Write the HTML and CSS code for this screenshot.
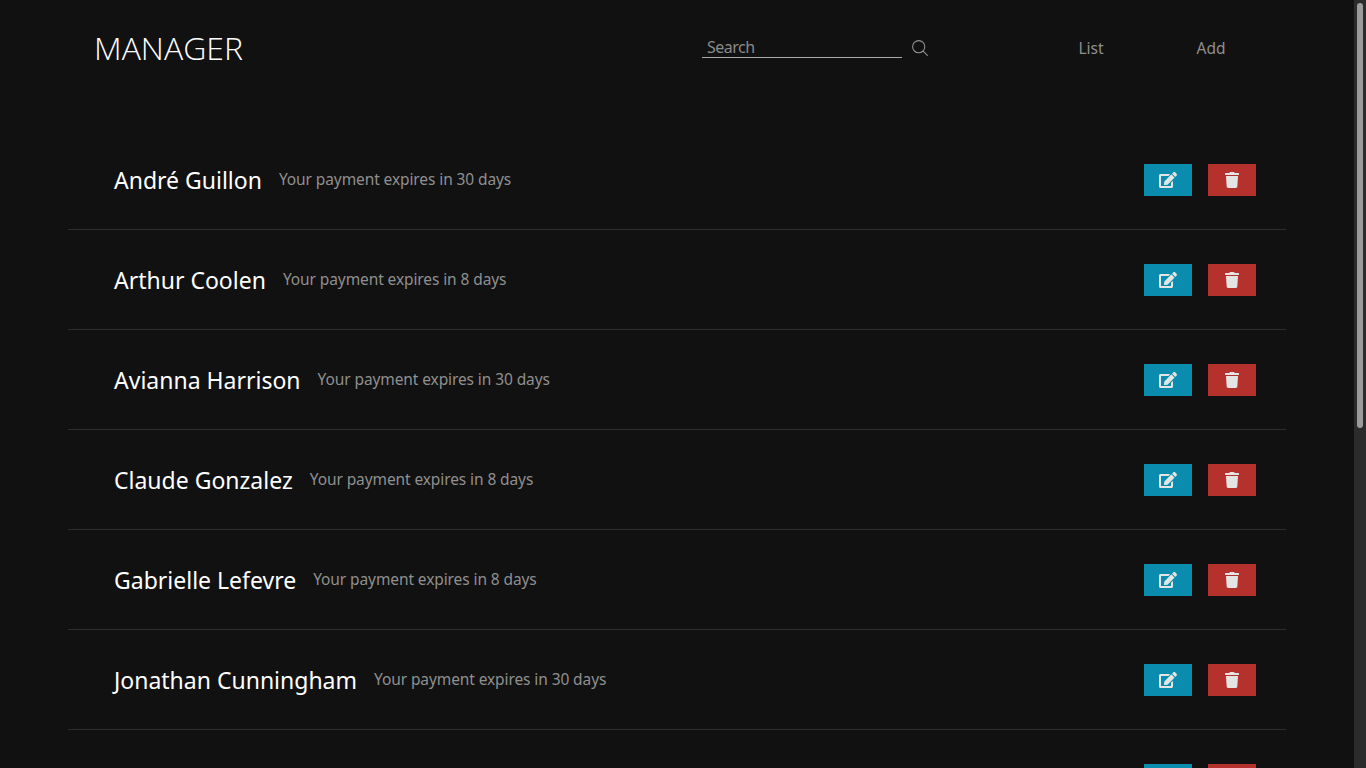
FILE: index.html
```html
<!DOCTYPE html>
<html lang="en">
<head>
<meta charset="utf-8">
<title>Manager</title>
<link rel="stylesheet" href="styles.css">
</head>
<body>
<div class="scrollbar"><div class="scrollbar-thumb"></div></div>
<header class="topbar">
  <h1 class="brand">MANAGER</h1>
  <form class="search">
    <input class="search-input" type="text" placeholder="Search">
    <svg class="search-icon" viewBox="0 0 16 16" width="16" height="16"><circle cx="6.700" cy="6.700" r="6.100"/><path d="M11.100 11.100l4.600 4.600"/></svg>
  </form>
  <nav class="nav"><a class="nav-link">List</a><a class="nav-link">Add</a></nav>
</header>
<main class="list">
  <svg class="sprites" width="0" height="0">
    <symbol id="edit" viewBox="0 0 576 512"><path d="M402.600 83.200l90.200 90.200c3.800 3.800 3.800 10 0 13.800L274.400 405.600l-92.800 10.300c-12.400 1.400-22.900-9.100-21.500-21.500l10.300-92.800L388.800 83.200c3.800-3.800 10-3.800 13.800 0zm162-22.900l-48.800-48.800c-15.200-15.200-39.900-15.200-55.200 0l-35.400 35.400c-3.800 3.800-3.800 10 0 13.800l90.200 90.200c3.800 3.800 10 3.800 13.800 0l35.400-35.400c15.200-15.300 15.200-40 0-55.200zM384 346.200V448H64V128h229.800c3.200 0 6.200-1.300 8.500-3.500l40-40c7.600-7.600 2.200-20.500-8.500-20.500H48C21.500 64 0 85.500 0 112v352c0 26.500 21.500 48 48 48h352c26.500 0 48-21.500 48-48V306.200c0-10.700-12.900-16-20.500-8.500l-40 40c-2.200 2.300-3.500 5.300-3.500 8.500z"/></symbol>
    <symbol id="trash" viewBox="0 0 448 512"><path d="M432 32H312l-9.400-18.700A24 24 0 0 0 281.100 0H166.800a23.720 23.720 0 0 0-21.400 13.300L136 32H16A16 16 0 0 0 0 48v32a16 16 0 0 0 16 16h416a16 16 0 0 0 16-16V48a16 16 0 0 0-16-16zM53.200 467a48 48 0 0 0 47.900 45h245.800a48 48 0 0 0 47.900-45L416 128H32z"/></symbol>
  </svg>
  <article class="row"><div class="who"><span class="name">André Guillon</span><span class="note">Your payment expires in 30 days</span></div><div class="actions"><button class="btn btn-edit"><svg class="ico-edit"><use href="#edit"/></svg></button><button class="btn btn-del"><svg class="ico-del"><use href="#trash"/></svg></button></div></article>
  <article class="row"><div class="who"><span class="name">Arthur Coolen</span><span class="note">Your payment expires in 8 days</span></div><div class="actions"><button class="btn btn-edit"><svg class="ico-edit"><use href="#edit"/></svg></button><button class="btn btn-del"><svg class="ico-del"><use href="#trash"/></svg></button></div></article>
  <article class="row"><div class="who"><span class="name">Avianna Harrison</span><span class="note">Your payment expires in 30 days</span></div><div class="actions"><button class="btn btn-edit"><svg class="ico-edit"><use href="#edit"/></svg></button><button class="btn btn-del"><svg class="ico-del"><use href="#trash"/></svg></button></div></article>
  <article class="row"><div class="who"><span class="name">Claude Gonzalez</span><span class="note">Your payment expires in 8 days</span></div><div class="actions"><button class="btn btn-edit"><svg class="ico-edit"><use href="#edit"/></svg></button><button class="btn btn-del"><svg class="ico-del"><use href="#trash"/></svg></button></div></article>
  <article class="row"><div class="who"><span class="name">Gabrielle Lefevre</span><span class="note">Your payment expires in 8 days</span></div><div class="actions"><button class="btn btn-edit"><svg class="ico-edit"><use href="#edit"/></svg></button><button class="btn btn-del"><svg class="ico-del"><use href="#trash"/></svg></button></div></article>
  <article class="row"><div class="who"><span class="name">Jonathan Cunningham</span><span class="note">Your payment expires in 30 days</span></div><div class="actions"><button class="btn btn-edit"><svg class="ico-edit"><use href="#edit"/></svg></button><button class="btn btn-del"><svg class="ico-del"><use href="#trash"/></svg></button></div></article>
  <article class="row row-clipped"><div class="actions"><button class="btn btn-edit"><svg class="ico-edit"><use href="#edit"/></svg></button><button class="btn btn-del"><svg class="ico-del"><use href="#trash"/></svg></button></div></article>
</main>
</body>
</html>
```
FILE: styles.css
```css
html, body { height: 100%; overflow: hidden; }
body { margin: 0; background: #111111; font-family: "Noto Sans", "Open Sans", sans-serif; color: #fff; }
.scrollbar { position: fixed; top: 0; right: 0; bottom: 0; width: 12px; background: #2b2b2b; }
.scrollbar-thumb { position: absolute; top: 3px; left: 3px; width: 6px; height: 425px; border-radius: 3px; background: #9b9b9b; }
.topbar { display: flex; align-items: center; height: 96px; padding: 0 0 0 94px; }
.brand { margin: 0 0 2px; width: 608px; font-size: 32px; font-weight: 300; font-family: "Open Sans", sans-serif; color: #fff; }
.search { display: flex; align-items: center; width: 329px; gap: 10px; }
.search-input { width: 200px; height: 20px; box-sizing: border-box; padding: 0 5px 1px; border: 0; border-bottom: 1px solid #aaaaaa; background: transparent; font: 16px "Noto Sans", sans-serif; letter-spacing: -0.5px; color: #999; outline: 0; }
.search-input::placeholder { color: #8a8a8a; opacity: 1; }
.search-icon { fill: none; stroke: #8f8f8f; stroke-width: 1.1; }
.nav { display: flex; }
.nav-link { width: 120px; text-align: center; font-size: 15.5px; color: #8f8f8f; }
.list { padding: 34px 68px 0; width: 1218px; }
.sprites { display: block; }
.row { display: flex; justify-content: space-between; align-items: center; height: 99px; padding: 0 30px 0 46px; border-bottom: 1px solid #2e2e2e; }
.row-clipped { justify-content: flex-end; }
.who { display: flex; align-items: center; gap: 17px; }
.name { font-size: 23px; color: #fff; }
.note { font-size: 15.5px; letter-spacing: -0.1px; color: #8f8f8f; padding-bottom: 2px; }
.actions { display: flex; gap: 16px; }
.btn { display: flex; align-items: center; justify-content: center; width: 48px; height: 32px; padding: 0; border: 0; }
.btn-edit { background: #098cad; }
.btn-del { background: #b5312b; }
.ico-edit { width: 18px; height: 16px; fill: #e4e4e4; }
.ico-del { width: 14px; height: 16px; fill: #e4e4e4; }
```
